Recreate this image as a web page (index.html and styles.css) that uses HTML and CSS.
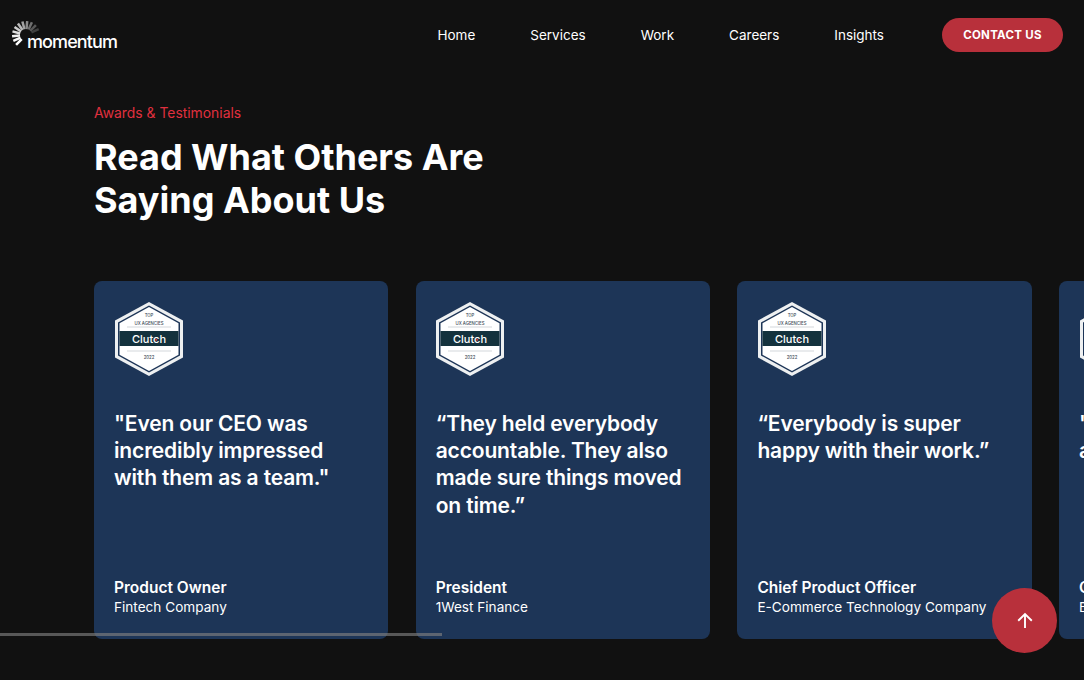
FILE: index.html
```html
<!DOCTYPE html>
<html>
    <head>
        <meta charset="utf-8">
        <title>Momentum</title>
        <link rel="stylesheet" href="styles.css">
    </head>
    <body>
        <!-- header -->
        <header class="header">
            <a class="logo" href="#">
                <svg class="logo-mark" width="28" height="28" viewBox="0 0 28 28">
                    <g fill="none" stroke-width="2.500">
                        <path d="M9.760 18.240L4.100 23.900" stroke="#fff"/>
                        <path d="M8.560 16.540L1.300 19.900" stroke="#fafafa"/>
                        <path d="M8.020 14.520L0.050 15.200" stroke="#f0f0f0"/>
                        <path d="M8.200 12.450L0.480 10.400" stroke="#e0e0e0"/>
                        <path d="M9.090 10.560L2.530 5.960" stroke="#cdcdcd"/>
                        <path d="M10.560 9.090L5.960 2.530" stroke="#b8b8b8"/>
                        <path d="M12.450 8.200L10.400 0.480" stroke="#a2a2a2"/>
                        <path d="M14.520 8.020L15.200 0.050" stroke="#8a8a8a"/>
                        <path d="M16.540 8.560L19.900 1.300" stroke="#707070"/>
                        <path d="M18.240 9.760L23.900 4.100" stroke="#585858"/>
                        <path d="M19.440 11.460L26.700 8.100" stroke="#404040"/>
                    </g>
                </svg>
                <span class="logo-text">momentum</span>
            </a>
            <nav class="nav">
                <a href="#">Home</a>
                <a href="#">Services</a>
                <a href="#">Work</a>
                <a href="#">Careers</a>
                <a href="#">Insights</a>
            </nav>
            <a class="contact" href="#">CONTACT US</a>
        </header>

        <!-- title -->
        <section class="intro">
            <p class="eyebrow">Awards &amp; Testimonials</p>
            <h1>Read What Others Are<br>Saying About Us</h1>
        </section>

        <!-- cards -->
        <section class="cards">
            <article class="card">
                <svg class="badge" viewBox="0 0 68 74"><use href="#clutch"/></svg>
                <p class="quote">"Even our CEO was incredibly impressed with them as a team."</p>
                <p class="role">Product Owner</p>
                <p class="company">Fintech Company</p>
            </article>
            <article class="card">
                <svg class="badge" viewBox="0 0 68 74"><use href="#clutch"/></svg>
                <p class="quote">“They held everybody accountable. They also made sure things moved on time.”</p>
                <p class="role">President</p>
                <p class="company">1West Finance</p>
            </article>
            <article class="card">
                <svg class="badge" viewBox="0 0 68 74"><use href="#clutch"/></svg>
                <p class="quote">“Everybody is super happy with their work.”</p>
                <p class="role">Chief Product Officer</p>
                <p class="company">E-Commerce Technology Company</p>
            </article>
            <article class="card">
                <svg class="badge" viewBox="0 0 68 74"><use href="#clutch"/></svg>
                <p class="quote">"They were responsive and always on time."</p>
                <p class="role">CEO</p>
                <p class="company">Bank</p>
            </article>
        </section>

        <div class="track"></div>

        <a class="to-top" href="#">
            <svg width="18" height="18" viewBox="0 0 18 18" fill="none" stroke="#fff" stroke-width="1.900">
                <path d="M9 16V2.500M2.200 8.700L9 2L15.800 8.700"/>
            </svg>
        </a>

        <!-- clutch badge -->
        <svg class="defs" width="0" height="0">
            <symbol id="clutch" viewBox="0 0 68 74">
                <path d="M34 0L68 18.500V55.500L34 74L0 55.500V18.500Z" fill="#eef0f1"/>
                <path d="M34 3.500L65 20.500V53.500L34 70.500L3 53.500V20.500Z" fill="#1d3557"/>
                <path d="M34 5L63.500 21.300V52.700L34 69L4.500 52.700V21.300Z" fill="#fff"/>
                <path d="M12 25H56M12 49H56" stroke="#b5bcc4" stroke-width="0.600"/>
                <rect x="4.500" y="29" width="59" height="15" fill="#14323d"/>
                <text class="badge-small" x="34" y="14.500">TOP</text>
                <text class="badge-small" x="34" y="22.500">UX AGENCIES</text>
                <text class="badge-name" x="34" y="40.500">Clutch</text>
                <circle cx="41.300" cy="37.800" r="1" fill="#d9383c"/>
                <text class="badge-small" x="34" y="56.500">2022</text>
            </symbol>
        </svg>
    </body>
</html>
```

FILE: styles.css
```css
*{
    margin: 0;
    padding: 0;
    box-sizing: border-box;
}
html,body{
    height: 100%;
    overflow: hidden;
}
body{
    background-color: #111111;
    color: #ffffff;
    font-family: Inter, "Liberation Sans", sans-serif;
    position: relative;
}
a{
    color: inherit;
    text-decoration: none;
}

/* header */
.header{
    display: flex;
    align-items: center;
    height: 70px;
    padding: 0 21px 0 12px;
}
.logo{
    display: flex;
    align-items: flex-end;
    height: 28px;
}
.logo-mark{
    flex: none;
}
.logo-text{
    margin-left: -13px;
    margin-bottom: -3px;
    font-size: 18px;
    font-weight: 500;
    letter-spacing: -0.9px;
    line-height: 20px;
}
.nav{
    display: flex;
    gap: 55px;
    margin-left: auto;
    margin-bottom: 1px;
    font-size: 13.500px;
    line-height: 20px;
}
.contact{
    display: flex;
    align-items: center;
    justify-content: center;
    width: 121px;
    height: 34px;
    margin-left: 58px;
    background-color: #b8303b;
    border-radius: 17px;
    font-size: 11.500px;
    font-weight: 700;
    letter-spacing: 0.3px;
}

/* title */
.intro{
    padding: 33px 0 0 94px;
}
.eyebrow{
    color: #e0303f;
    font-size: 13.900px;
    line-height: 20px;
}
h1{
    margin-top: 13px;
    font-size: 36px;
    font-weight: 700;
    line-height: 43px;
}

/* cards */
.cards{
    display: flex;
    gap: 27.400px;
    margin-top: 59px;
    padding-left: 94px;
}
.card{
    flex: none;
    display: flex;
    flex-direction: column;
    width: 294.300px;
    height: 358px;
    padding: 21px 20px 0;
    background-color: #1d3557;
    border-radius: 8px;
}
.badge{
    display: block;
    width: 68px;
    height: 74px;
    margin-left: 0.500px;
    flex: none;
}
.quote{
    height: 167px;
    margin-top: 34px;
    font-size: 21px;
    font-weight: 600;
    line-height: 27.200px;
    letter-spacing: -0.15px;
}
.role{
    font-size: 15.500px;
    font-weight: 600;
    line-height: 21px;
}
.company{
    font-size: 13.600px;
    line-height: 19px;
}
.badge-small{
    fill: #3b4a55;
    font-size: 4.300px;
    font-weight: 500;
    text-anchor: middle;
}
.badge-name{
    fill: #ffffff;
    font-size: 11px;
    font-weight: 500;
    text-anchor: middle;
}
.defs{
    position: absolute;
}

/* overlays */
.track{
    position: absolute;
    left: 0;
    top: 633px;
    width: 442px;
    height: 3px;
    background-color: rgba(128,128,128,0.65);
}
.to-top{
    position: absolute;
    left: 992px;
    top: 588px;
    display: flex;
    align-items: center;
    justify-content: center;
    width: 65px;
    height: 65px;
    background-color: #b8303b;
    border-radius: 50%;
}
```
